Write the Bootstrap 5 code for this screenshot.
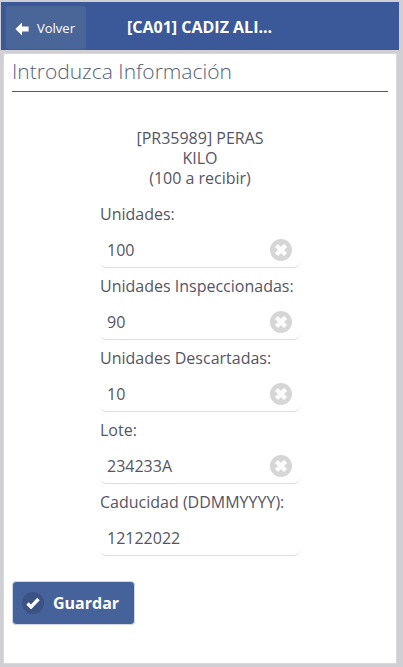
<!DOCTYPE html>
<html lang="es">
<head>
  <meta charset="UTF-8" />
  <meta name="viewport" content="width=device-width, initial-scale=1.0" />
  <title>Introduzca Información</title>
  <link href="https://cdn.jsdelivr.net/npm/bootstrap@5.3.3/dist/css/bootstrap.min.css" rel="stylesheet" />
  <style>
    body {
      font-family: "Open Sans", sans-serif;
      background: #cfcfd4;
      color: #555566;
      height: 667px;
      overflow: hidden;
      padding: 2px 4px 3px 1px;
    }
    .app-header {
      height: 48px;
      background: #3b5998;
      color: #fff;
      padding: 4px 5px 1px;
    }
    .btn-back {
      width: 80px;
      height: 43px;
      background: #4a6598;
      border-radius: 3px;
      color: #fff;
      font-size: 13px;
      padding: 2px 0 0 9px;
      gap: 8px;
      text-decoration: none;
    }
    .header-title {
      margin-left: 41px;
      font-size: 16px;
      font-weight: 700;
      line-height: 43px;
    }
    .content-panel {
      height: 611px;
      margin: 3px 2px 0 2px;
      background: #fff;
      border: 1px solid #d8d8dc;
      padding: 0 8px;
    }
    .panel-title {
      font-size: 21px;
      font-weight: 300;
      line-height: 34px;
      margin: 0;
      color: #555f7e;
      border-bottom: 1px solid #3b5998;
      height: 38px;
    }
    .product-info {
      margin-top: 36px;
      font-size: 16px;
      line-height: 20px;
    }
    .form-area {
      width: 200px;
      margin: 16px auto 0;
    }
    .field-label {
      font-size: 16px;
      line-height: 20px;
      margin: 0;
      display: block;
    }
    .field-box {
      height: 37px;
      margin-top: 7px;
      margin-bottom: 8px;
      padding: 1px 8px 0 7px;
      border-bottom: 1px solid #dedee2;
      border-radius: 0 0 6px 6px;
    }
    .field-input {
      border: 0;
      outline: 0;
      padding: 0;
      min-width: 0;
      flex: 1;
      font-size: 16px;
      color: #555566;
      font-family: inherit;
    }
    .btn-save {
      width: 123px;
      height: 44px;
      margin-top: 25px;
      background: #46629b;
      border: 1px solid #cfd6e4;
      border-radius: 4px;
      color: #fff;
      font-size: 16px;
      font-weight: 700;
      padding: 0 0 0 9px;
      gap: 9px;
    }
    .save-icon {
      width: 22px;
      height: 22px;
      border-radius: 50%;
      background: #3b5285;
    }
  </style>
</head>
<body>

  <!-- Header -->
  <div class="app-header d-flex align-items-center">
    <a href="#" class="btn-back d-flex align-items-center">
      <svg width="14" height="14" viewBox="0 0 14 14"><path d="M7 .4 .4 7 7 13.6V9.4h6.6V4.6H7z" fill="#fff"/></svg>
      <span>Volver</span>
    </a>
    <div class="header-title">[CA01] CADIZ ALI...</div>
  </div>

  <!-- Form panel -->
  <div class="content-panel">
    <h1 class="panel-title">Introduzca Información</h1>
    <div class="product-info text-center">
      <div>[PR35989] PERAS</div>
      <div>KILO</div>
      <div>(100 a recibir)</div>
    </div>

    <form class="form-area">
      <label class="field-label">Unidades:</label>
      <div class="field-box d-flex align-items-center">
        <input class="field-input" value="100" />
        <svg width="22" height="22" viewBox="0 0 22 22"><circle cx="11" cy="11" r="11" fill="#d6d6d6"/><path d="M6.5 6.5l9 9M15.5 6.5l-9 9" stroke="#fff" stroke-width="4.4"/></svg>
      </div>
      <label class="field-label">Unidades Inspeccionadas:</label>
      <div class="field-box d-flex align-items-center">
        <input class="field-input" value="90" />
        <svg width="22" height="22" viewBox="0 0 22 22"><circle cx="11" cy="11" r="11" fill="#d6d6d6"/><path d="M6.5 6.5l9 9M15.5 6.5l-9 9" stroke="#fff" stroke-width="4.4"/></svg>
      </div>
      <label class="field-label">Unidades Descartadas:</label>
      <div class="field-box d-flex align-items-center">
        <input class="field-input" value="10" />
        <svg width="22" height="22" viewBox="0 0 22 22"><circle cx="11" cy="11" r="11" fill="#d6d6d6"/><path d="M6.5 6.5l9 9M15.5 6.5l-9 9" stroke="#fff" stroke-width="4.4"/></svg>
      </div>
      <label class="field-label">Lote:</label>
      <div class="field-box d-flex align-items-center">
        <input class="field-input" value="234233A" />
        <svg width="22" height="22" viewBox="0 0 22 22"><circle cx="11" cy="11" r="11" fill="#d6d6d6"/><path d="M6.5 6.5l9 9M15.5 6.5l-9 9" stroke="#fff" stroke-width="4.4"/></svg>
      </div>
      <label class="field-label">Caducidad (DDMMYYYY):</label>
      <div class="field-box d-flex align-items-center">
        <input class="field-input" value="12122022" />
      </div>
    </form>

    <button type="button" class="btn-save d-flex align-items-center">
      <span class="save-icon d-flex align-items-center justify-content-center">
        <svg width="14" height="12" viewBox="0 0 14 12"><path d="M1.5 6.5 5 10l7.5-8" fill="none" stroke="#fff" stroke-width="3.4"/></svg>
      </span>
      <span>Guardar</span>
    </button>
  </div>

  <script src="https://cdn.jsdelivr.net/npm/bootstrap@5.3.3/dist/js/bootstrap.bundle.min.js"></script>
</body>
</html>
